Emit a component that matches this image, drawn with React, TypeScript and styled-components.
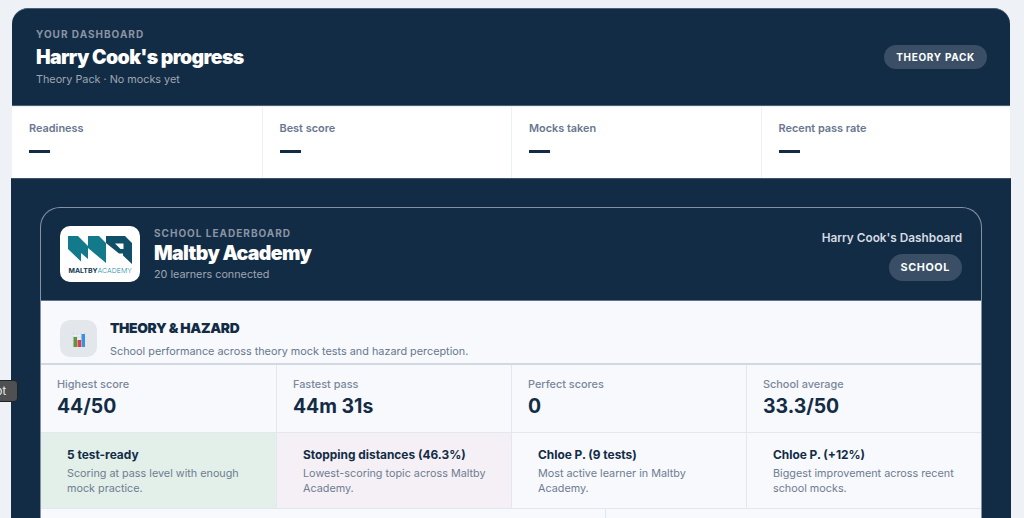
import styled, { createGlobalStyle } from 'styled-components';

const GlobalStyle = createGlobalStyle`
  * { box-sizing: border-box; }
  html, body { margin: 0; height: 100%; overflow: hidden; background: #eef1f6; }
  body { font-family: Inter, "Liberation Sans", sans-serif; color: #132c46; }
`;

const Page = styled.div`
  height: 100vh;
  overflow: hidden;
  padding: 8px 14px 0 12px;
`;

const Hero = styled.header`
  display: flex;
  justify-content: space-between;
  align-items: center;
  height: 98px;
  padding: 0 23px 0 24px;
  background: #132c46;
  border-top: 1px solid #4a6075;
  border-bottom: 1px solid #4a6075;
  border-radius: 16px 16px 0 0;
`;

const HeroText = styled.div`
  padding-top: 2px;
`;

const Eyebrow = styled.div`
  font-size: 10px;
  line-height: 12px;
  font-weight: 700;
  letter-spacing: 1px;
  text-transform: uppercase;
  color: #8a95a3;
`;

const HeroTitle = styled.h1`
  margin: 5px 0 2px;
  font-size: 19.5px;
  line-height: 25px;
  font-weight: 900;
  letter-spacing: -0.62px;
  color: #fff;
`;

const Subtle = styled.div`
  font-size: 10.8px;
  line-height: 16px;
  color: #9ea7b2;
`;

const Pill = styled.span<{ $tall?: boolean }>`
  display: inline-flex;
  align-items: center;
  height: ${({ $tall }) => ($tall ? '27px' : '24px')};
  padding: 0 12px;
  border-radius: 14px;
  background: #3a4f66;
  color: #fff;
  font-size: ${({ $tall }) => ($tall ? '10.8px' : '10px')};
  font-weight: 700;
  letter-spacing: ${({ $tall }) => ($tall ? '0.6px' : '0.7px')};
  text-transform: uppercase;
`;

const TopStats = styled.section`
  display: grid;
  grid-template-columns: repeat(4, 1fr);
  height: 71px;
  margin-top: 1px;
  background: #fff;
`;

const TopStat = styled.div`
  padding: 14px 17px 0;
  border-left: 1px solid #edf0f4;
  &:first-child { border-left: 0; }
`;

const TopLabel = styled.div`
  font-size: 10.9px;
  line-height: 14px;
  font-weight: 600;
  color: #68778f;
`;

const Dash = styled.div`
  width: 21px;
  height: 3px;
  margin-top: 15px;
  background: #132c46;
`;

const Panel = styled.main`
  margin: 0 -1px;
  padding: 28px 29px 0;
  height: 400px;
  background: #132c46;
  border-top: 1px solid #3d5369;
`;

const Board = styled.div`
  border: 1px solid #8492a1;
  border-bottom: 0;
  border-radius: 20px 20px 0 0;
  overflow: hidden;
`;

const BoardHead = styled.div`
  display: flex;
  justify-content: space-between;
  align-items: center;
  height: 93px;
  padding: 0 19px 0 19px;
  border-bottom: 1px solid #61738a;
`;

const SchoolBlock = styled.div`
  display: flex;
  align-items: center;
  gap: 14px;
`;

const LogoCard = styled.div`
  width: 80px;
  height: 56px;
  border-radius: 10px;
  background: #fff;
  overflow: hidden;
  svg { display: block; }
`;

const SchoolText = styled.div`
  padding-top: 1px;
`;

const SchoolName = styled.h2`
  margin: 2px 0 1px;
  font-size: 19.5px;
  line-height: 25px;
  font-weight: 900;
  letter-spacing: -0.62px;
  color: #fff;
`;

const BoardMeta = styled.div`
  display: flex;
  flex-direction: column;
  align-items: flex-end;
  gap: 8px;
  padding-top: 2px;
`;

const OwnerName = styled.div`
  font-size: 11.8px;
  line-height: 16px;
  font-weight: 600;
  color: #d6dbe2;
`;

const Body = styled.div`
  background: #f7f9fd;
  height: 220px;
`;

const SectionHead = styled.div`
  display: flex;
  align-items: flex-start;
  gap: 13px;
  height: 64px;
  padding: 19px 19px 0;
  border-bottom: 2px solid #d3d9e2;
`;

const IconTile = styled.div`
  display: flex;
  align-items: center;
  justify-content: center;
  width: 37px;
  height: 37px;
  border-radius: 10px;
  background: #e3e6eb;
`;

const SectionTitle = styled.h3`
  margin: 0 0 8px;
  font-size: 13.8px;
  line-height: 16px;
  font-weight: 900;
  letter-spacing: -0.35px;
  text-transform: uppercase;
  color: #132c46;
`;

const SectionText = styled.div`
  font-size: 10.85px;
  line-height: 14px;
  color: #68778f;
`;

const FourCols = styled.div`
  display: grid;
  grid-template-columns: repeat(4, 1fr);
`;

const Metric = styled.div`
  height: 68px;
  padding: 12px 16px 0;
  border-left: 1px solid #e4e8ee;
  border-bottom: 1px solid #e4e8ee;
  &:first-child { border-left: 0; }
`;

const MetricLabel = styled.div`
  font-size: 10.9px;
  line-height: 14px;
  font-weight: 500;
  color: #7a879b;
`;

const MetricValue = styled.div`
  margin-top: 3px;
  font-size: 19.4px;
  line-height: 24px;
  font-weight: 700;
  color: #132c46;
`;

const Insight = styled.div<{ $tone?: 'good' | 'bad' }>`
  height: 76px;
  padding: 14px 16px 0 26px;
  border-left: 1px solid #e4e8ee;
  border-bottom: 1px solid #e4e8ee;
  background: ${({ $tone }) => ($tone === 'good' ? '#e2f0e9' : $tone === 'bad' ? '#f5f0f5' : 'transparent')};
  &:first-child { border-left: 0; }
`;

const InsightTitle = styled.div`
  font-size: 11.9px;
  line-height: 15px;
  font-weight: 700;
  color: #132c46;
`;

const InsightText = styled.div`
  margin-top: 4px;
  font-size: 10.8px;
  line-height: 15px;
  color: #6e7c91;
`;

const LowerRow = styled.div`
  display: grid;
  grid-template-columns: 3fr 2fr;
  height: 30px;
`;

const LowerCell = styled.div`
  border-left: 1px solid #e4e8ee;
  &:first-child { border-left: 0; }
`;

const EdgeTip = styled.div`
  position: fixed;
  left: -40px;
  top: 380px;
  width: 58px;
  height: 22px;
  padding-right: 11px;
  display: flex;
  align-items: center;
  justify-content: flex-end;
  border: 1px solid #222;
  border-radius: 4px;
  background: #4f5053;
  color: #f2f2f2;
  font-size: 11px;
`;

const topStats = ['Readiness', 'Best score', 'Mocks taken', 'Recent pass rate'];

const metrics = [
  { label: 'Highest score', value: '44/50' },
  { label: 'Fastest pass', value: '44m 31s' },
  { label: 'Perfect scores', value: '0' },
  { label: 'School average', value: '33.3/50' },
];

const insights: { title: string; text: string; tone?: 'good' | 'bad' }[] = [
  { title: '5 test-ready', text: 'Scoring at pass level with enough mock practice.', tone: 'good' },
  { title: 'Stopping distances (46.3%)', text: 'Lowest-scoring topic across Maltby Academy.', tone: 'bad' },
  { title: 'Chloe P. (9 tests)', text: 'Most active learner in Maltby Academy.' },
  { title: 'Chloe P. (+12%)', text: 'Biggest improvement across recent school mocks.' },
];

const MaltbyLogo = () => (
  <svg width="80" height="56" viewBox="0 0 80 56">
    <path fill="#137a8c" d="M8 10H18L28 20V10H39L46 17V37L28 22V33L21 27V35.500L8 23z" />
    <path
      fill="#0f4f68"
      fillRule="evenodd"
      d="M46 10H65L72 17V38L63 29.500V27.500H59L46 17zM55 17.500L60.500 23H63.500V17.500z"
    />
    <text x="8.500" y="47" fontFamily="Inter, sans-serif" fontSize="6.500" fontWeight="700" fill="#14384f" textLength="29" lengthAdjust="spacingAndGlyphs">
      MALTBY
    </text>
    <text x="37.500" y="47" fontFamily="Inter, sans-serif" fontSize="6.500" fontWeight="300" fill="#1b8a9c" textLength="34.500" lengthAdjust="spacingAndGlyphs">
      ACADEMY
    </text>
  </svg>
);

const ChartEmoji = () => (
  <svg width="16" height="16" viewBox="0 0 16 16">
    <rect x="1" y="1" width="14" height="15" fill="#dbe2ec" />
    <path d="M1 4.500h14M1 8h14M1 11.500h14M4.500 1v15M8 1v15M11.500 1v15" stroke="#eff2f7" strokeWidth="0.8" />
    <rect x="2.500" y="6" width="3.500" height="10" fill="#5f9440" />
    <rect x="6.500" y="9" width="3.500" height="7" fill="#e03a48" />
    <rect x="10.500" y="3" width="3.500" height="13" fill="#3f8fdc" />
  </svg>
);

export default function App() {
  return (
    <>
      <GlobalStyle />
      <Page>
        <Hero>
          <HeroText>
            <Eyebrow>Your dashboard</Eyebrow>
            <HeroTitle>Harry Cook's progress</HeroTitle>
            <Subtle>Theory Pack · No mocks yet</Subtle>
          </HeroText>
          <Pill>Theory Pack</Pill>
        </Hero>
        <TopStats>
          {topStats.map((label) => (
            <TopStat key={label}>
              <TopLabel>{label}</TopLabel>
              <Dash />
            </TopStat>
          ))}
        </TopStats>
        <Panel>
          <Board>
            <BoardHead>
              <SchoolBlock>
                <LogoCard>
                  <MaltbyLogo />
                </LogoCard>
                <SchoolText>
                  <Eyebrow>School leaderboard</Eyebrow>
                  <SchoolName>Maltby Academy</SchoolName>
                  <Subtle>20 learners connected</Subtle>
                </SchoolText>
              </SchoolBlock>
              <BoardMeta>
                <OwnerName>Harry Cook's Dashboard</OwnerName>
                <Pill $tall>School</Pill>
              </BoardMeta>
            </BoardHead>
            <Body>
              <SectionHead>
                <IconTile>
                  <ChartEmoji />
                </IconTile>
                <div>
                  <SectionTitle>Theory &amp; Hazard</SectionTitle>
                  <SectionText>School performance across theory mock tests and hazard perception.</SectionText>
                </div>
              </SectionHead>
              <FourCols>
                {metrics.map((m) => (
                  <Metric key={m.label}>
                    <MetricLabel>{m.label}</MetricLabel>
                    <MetricValue>{m.value}</MetricValue>
                  </Metric>
                ))}
              </FourCols>
              <FourCols>
                {insights.map((i) => (
                  <Insight key={i.title} $tone={i.tone}>
                    <InsightTitle>{i.title}</InsightTitle>
                    <InsightText>{i.text}</InsightText>
                  </Insight>
                ))}
              </FourCols>
              <LowerRow>
                <LowerCell />
                <LowerCell />
              </LowerRow>
            </Body>
          </Board>
        </Panel>
      </Page>
      <EdgeTip>Chatbot</EdgeTip>
    </>
  );
}
